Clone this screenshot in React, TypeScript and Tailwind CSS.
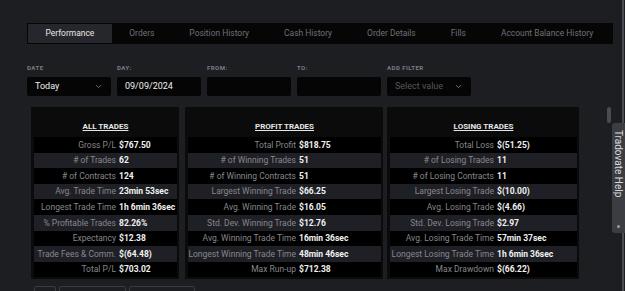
import React from "react";
import { ChevronDown } from "lucide-react";

const tabs = ["Performance", "Orders", "Position History", "Cash History", "Order Details", "Fills", "Account Balance History"];

type Row = [string, string];

const allTrades: Row[] = [
  ["Gross P/L", "$767.50"],
  ["# of Trades", "62"],
  ["# of Contracts", "124"],
  ["Avg. Trade Time", "23min 53sec"],
  ["Longest Trade Time", "1h 6min 36sec"],
  ["% Profitable Trades", "82.26%"],
  ["Expectancy", "$12.38"],
  ["Trade Fees & Comm.", "$(64.48)"],
  ["Total P/L", "$703.02"],
];

const profitTrades: Row[] = [
  ["Total Profit", "$818.75"],
  ["# of Winning Trades", "51"],
  ["# of Winning Contracts", "51"],
  ["Largest Winning Trade", "$66.25"],
  ["Avg. Winning Trade", "$16.05"],
  ["Std. Dev. Winning Trade", "$12.76"],
  ["Avg. Winning Trade Time", "16min 36sec"],
  ["Longest Winning Trade Time", "48min 46sec"],
  ["Max Run-up", "$712.38"],
];

const losingTrades: Row[] = [
  ["Total Loss", "$(51.25)"],
  ["# of Losing Trades", "11"],
  ["# of Losing Contracts", "11"],
  ["Largest Losing Trade", "$(10.00)"],
  ["Avg. Losing Trade", "$(4.66)"],
  ["Std. Dev. Losing Trade", "$2.97"],
  ["Avg. Losing Trade Time", "57min 37sec"],
  ["Longest Losing Trade Time", "1h 6min 36sec"],
  ["Max Drawdown", "$(66.22)"],
];

function Card({ title, rows, width, labelW }: { title: string; rows: Row[]; width: string; labelW: string }) {
  return (
    <div className={`${width} bg-[#0b0b0c] pl-[3px] pr-[2px] pb-[2px] shrink-0`}>
      <div className="h-[30px] pt-[15px] text-center text-[8px] leading-[9px] font-bold text-[#e6e6e6] underline underline-offset-[1px]">
        {title}
      </div>
      {rows.map(([l, v], i) => (
        <div
          key={l}
          className={`flex items-center h-[15.6px] ${i % 2 === 1 ? "bg-[#1f2025]" : "bg-[#000000]"}`}
        >
          <div className={`${labelW} shrink-0 text-right pr-[3px] text-[8.5px] text-[#86878c] whitespace-nowrap leading-none`}>{l}</div>
          <div className="text-[8.5px] font-bold text-[#f2f2f2] whitespace-nowrap leading-none">{v}</div>
        </div>
      ))}
    </div>
  );
}

function Filter({ label, children }: { label: string; children: React.ReactNode }) {
  return (
    <div className="w-[84px] flex flex-col">
      <div className="h-[8px] text-[6px] leading-[8px] font-bold tracking-[0.08em] text-[#7c7d82]">{label}</div>
      <div className="mt-[5px] h-[19px] bg-[#050505] rounded-[2px] flex items-center px-[8px] text-[9px]">{children}</div>
    </div>
  );
}

export default function App() {
  return (
    <div
      className="w-[625px] h-[291px] bg-[#1d1e22] relative overflow-hidden"
      style={{ fontFamily: "Roboto, 'Liberation Sans', sans-serif" }}
    >
      <div className="pl-[27px] pt-[23px]">
        <div className="flex h-[21px] w-[586px] bg-[#060606] p-[1px] overflow-hidden">
          {tabs.map((t, i) => (
            <div
              key={t}
              className={`h-[19px] flex items-center px-[17.5px] text-[8.45px] whitespace-nowrap ${
                i === 0 ? "bg-[#25272c] text-[#e8e8e8] rounded-[1px]" : "text-[#6f7075]"
              }`}
            >
              {t}
            </div>
          ))}
        </div>

        <div className="mt-[20px] flex gap-[6px]">
          <Filter label="DATE">
            <span className="text-[#f0f0f0]">Today</span>
            <ChevronDown className="ml-auto text-[#8a8b90]" size={9} strokeWidth={2} />
          </Filter>
          <Filter label="DAY:">
            <span className="text-[#f0f0f0]">09/09/2024</span>
          </Filter>
          <Filter label="FROM:">
            <span />
          </Filter>
          <Filter label="TO:">
            <span />
          </Filter>
          <Filter label="ADD FILTER">
            <span className="text-[#55565b]">Select value</span>
            <ChevronDown className="ml-auto text-[#9a9ba0]" size={9} strokeWidth={2} />
          </Filter>
        </div>

        <div className="mt-[11px] ml-[4px] flex">
          <Card title="ALL TRADES" rows={allTrades} width="w-[148px]" labelW="w-[85px]" />
          <div className="w-[6px]" />
          <Card title="PROFIT TRADES" rows={profitTrades} width="w-[198px]" labelW="w-[111px]" />
          <div className="w-[4px]" />
          <Card title="LOSING TRADES" rows={losingTrades} width="w-[192px]" labelW="w-[107px]" />
        </div>

        <div className="mt-[7px] ml-[7px] flex gap-[3px]">
          <div className="w-[22px] h-[18px] border border-[#3a3b40] rounded-[2px]" />
          <div className="w-[67px] h-[18px] border border-[#3a3b40] rounded-[2px]" />
          <div className="w-[66px] h-[18px] border border-[#3a3b40] rounded-[2px]" />
        </div>
      </div>

      {/* scrollbar thumb */}
      <div className="absolute left-[607px] top-[107px] w-[4px] h-[16px] rounded-full bg-[#4a4b50]" />
      {/* right vertical line */}
      <div className="absolute left-[622px] top-0 w-[2px] h-[291px] bg-[#4b4c51]" />
      {/* help tab */}
      <div className="absolute left-[612px] top-[123px] w-[13px] h-[110px] bg-[#3c3d42] rounded-l-[3px] flex flex-col items-center">
        <div
          className="mt-[7px] text-[10px] text-[#d8d8d8] whitespace-nowrap leading-[13px]"
          style={{ writingMode: "vertical-rl" }}
        >
          Tradovate Help
        </div>
        <div className="mt-auto mb-[5px] w-[3px] h-[3px] rounded-full bg-[#9a9ba0]" />
      </div>
    </div>
  );
}
